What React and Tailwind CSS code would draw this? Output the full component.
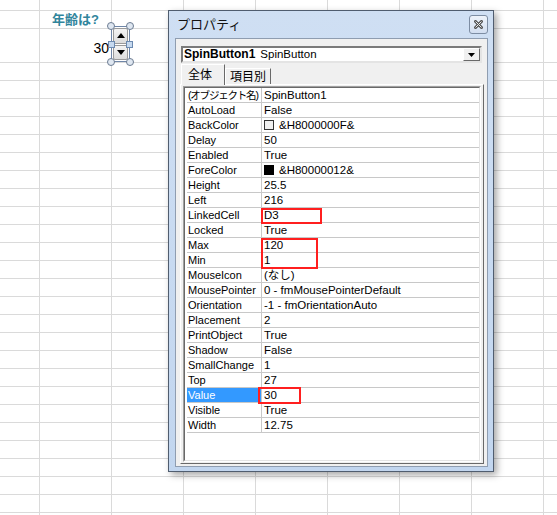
import React from "react";

const rowHeights = [11, 18, 34, ...Array(26).fill(18)];
const colWidths = [40, 72, 72, 72, 72, 72, 72, 72, 72];

const props = [
  ["(オブジェクト名)", "SpinButton1"],
  ["AutoLoad", "False"],
  ["BackColor", "&H8000000F&", "light"],
  ["Delay", "50"],
  ["Enabled", "True"],
  ["ForeColor", "&H80000012&", "dark"],
  ["Height", "25.5"],
  ["Left", "216"],
  ["LinkedCell", "D3"],
  ["Locked", "True"],
  ["Max", "120"],
  ["Min", "1"],
  ["MouseIcon", "(なし)"],
  ["MousePointer", "0 - fmMousePointerDefault"],
  ["Orientation", "-1 - fmOrientationAuto"],
  ["Placement", "2"],
  ["PrintObject", "True"],
  ["Shadow", "False"],
  ["SmallChange", "1"],
  ["Top", "27"],
  ["Value", "30"],
  ["Visible", "True"],
  ["Width", "12.75"],
];

const FONT = { fontFamily: '"Liberation Sans", "Noto Sans CJK JP", sans-serif' };

function Cell({ r, c }) {
  const h = rowHeights[r];
  const w = colWidths[c];
  const hc = h === 11 ? "h-[11px]" : h === 34 ? "h-[34px]" : "h-[18px]";
  const wc = w === 40 ? "w-[40px]" : "w-[72px]";
  let content = null;
  let extra = "";
  if (r === 1 && c === 1) {
    extra = "justify-center items-center";
    content = (
      <span className="text-[13px] leading-[15px] font-bold text-[#31859c] whitespace-nowrap">
        年齢は?
      </span>
    );
  }
  if (r === 2 && c === 1) {
    extra = "justify-end items-end pr-[2px] pb-[6px]";
    content = <span className="text-[14px] leading-[16px] text-black">30</span>;
  }
  return (
    <div className={`${wc} ${hc} shrink-0 flex border-r border-b border-[#dadada] ${extra}`}>
      {content}
    </div>
  );
}

function Handle({ pos }) {
  return <div className={`absolute ${pos} w-[8px] h-[8px] rounded-full border border-[#6c7c92] bg-[#dfe7f1]`} />;
}
function SqHandle({ pos }) {
  return <div className={`absolute ${pos} w-[7px] h-[7px] border border-[#6c8ab0] bg-[#c6d9ef]`} />;
}

function SpinButton() {
  return (
    <div className="absolute left-[111px] top-[26px] w-[19px] h-[36px] border border-[#6f86a8]">
      <div className="flex flex-col h-full px-[1px] py-[1px] gap-[1px]">
        <div className="flex-1 flex items-center justify-center rounded-[2px] border border-[#9a9a9a] bg-gradient-to-b from-[#f4f4f4] to-[#dcdcdc]">
          <svg width="8" height="5" viewBox="0 0 8 5">
            <polygon points="0,5 8,5 4,0" fill="#000" />
          </svg>
        </div>
        <div className="flex-1 flex items-center justify-center rounded-[2px] border border-[#9a9a9a] bg-gradient-to-b from-[#f4f4f4] to-[#dcdcdc]">
          <svg width="8" height="5" viewBox="0 0 8 5">
            <polygon points="0,0 8,0 4,5" fill="#000" />
          </svg>
        </div>
      </div>
      <Handle pos="-left-[5px] -top-[5px]" />
      <Handle pos="-right-[5px] -top-[5px]" />
      <Handle pos="-left-[5px] -bottom-[5px]" />
      <Handle pos="-right-[5px] -bottom-[5px]" />
      <SqHandle pos="-left-[4px] top-[14px]" />
      <SqHandle pos="-right-[4px] top-[14px]" />
    </div>
  );
}

function PropRow({ label, value, swatch, selected }) {
  return (
    <div className="flex h-[15px] border-b border-[#c8c8c8] text-[11px] leading-[14px]">
      <div
        className={`w-[75px] shrink-0 border-r border-[#c8c8c8] pl-[1px] whitespace-nowrap overflow-hidden ${
          selected ? "bg-[#3399ff] text-white" : "text-black"
        }`}
      >
        {label.startsWith("(") ? (
          <span className="text-[10.5px] tracking-[-1.2px]">{label}</span>
        ) : (
          label
        )}
      </div>
      <div className="flex-1 flex items-center pl-[2px] text-black whitespace-nowrap overflow-hidden">
        {swatch === "light" && <span className="w-[10px] h-[10px] mr-[5px] border border-[#333] bg-[#f0f0f0]" />}
        {swatch === "dark" && <span className="w-[10px] h-[10px] mr-[5px] border border-[#000] bg-[#000]" />}
        <span className="text-[11.5px]">{value}</span>
      </div>
    </div>
  );
}

function Dialog() {
  return (
    <div
      className="absolute left-[168px] top-[10px] w-[326px] h-[462px] border border-[#505d6f] bg-gradient-to-b from-[#cfdff3] to-[#c2d6ef] flex flex-col shadow-[3px_3px_7px_rgba(0,0,0,0.35)]"
      style={FONT}
    >
      <div className="h-[27px] shrink-0 flex items-center justify-between pl-[8px] pr-[5px]">
        <span className="text-[13px] leading-[16px] text-[#111]">プロパティ</span>
        <div className="w-[19px] h-[19px] rounded-[3px] border border-[#7d8da3] bg-gradient-to-b from-[#eef3fa] to-[#d2def0] flex items-center justify-center">
          <svg width="9" height="9" viewBox="0 0 9 9">
            <path d="M1.5 1.5 L7.5 7.5 M7.5 1.5 L1.5 7.5" stroke="#555" strokeWidth="3" strokeLinecap="square" />
            <path d="M1.5 1.5 L7.5 7.5 M7.5 1.5 L1.5 7.5" stroke="#e8e8e8" strokeWidth="1" />
          </svg>
        </div>
      </div>
      <div className="flex-1 ml-[6px] mr-[5px] mb-[4px] border border-[#8f9db0] bg-[#f0f0f0] flex flex-col">
        <div className="mt-[7px] mx-[5px] h-[17px] shrink-0 flex border-2 border-t-[#7a7a7a] border-l-[#7a7a7a] border-r-[#e4e4e4] border-b-[#e4e4e4] bg-white">
          <div className="flex-1 flex items-center pl-[1px] whitespace-nowrap overflow-hidden">
            <span className="text-[12px] leading-[13px] font-bold text-black">SpinButton1</span>
            <span className="text-[11.5px] leading-[13px] text-black ml-[5px]">SpinButton</span>
          </div>
          <div className="w-[17px] h-full shrink-0 flex items-center justify-center border border-t-white border-l-white border-r-[#696969] border-b-[#696969] bg-[#f0f0f0]">
            <svg width="7" height="4" viewBox="0 0 7 4">
              <polygon points="0,0 7,0 3.5,4" fill="#000" />
            </svg>
          </div>
        </div>
        <div className="mt-[1px] h-[20px] shrink-0 flex items-end ml-[5px]">
          <div className="relative z-10 w-[44px] h-[21px] -mb-[1px] border-l border-t border-r border-l-white border-t-white border-r-[#696969] bg-[#f0f0f0] pl-[6px] pt-[3px] text-[12px] leading-[14px] text-black">
            全体
          </div>
          <div className="w-[46px] h-[16px] border-l border-t border-r border-l-white border-t-white border-r-[#696969] bg-[#f0f0f0] pl-[4px] pt-[1px] text-[12px] leading-[14px] text-black">
            項目別
          </div>
        </div>
        <div className="flex-1 ml-[4px] mr-[3px] mb-[2px] border border-t-white border-l-white border-r-[#696969] border-b-[#696969] pl-[2px] pr-[2px] pt-[1px] pb-[1px] flex">
          <div className="flex-1 flex border border-t-[#a0a0a0] border-l-[#a0a0a0] border-r-white border-b-white">
            <div className="flex-1 border border-t-[#696969] border-l-[#696969] border-r-[#e3e3e3] border-b-[#e3e3e3] bg-white pl-[2px]">
              <div className="relative">
                {props.map(([l, v, s]) => (
                  <PropRow key={l} label={l} value={v} swatch={s} selected={l === "Value"} />
                ))}
                <div className="absolute left-[74px] top-[120px] w-[61px] h-[16px] border-2 border-[#ff1f1f]" />
                <div className="absolute left-[74px] top-[150px] w-[57px] h-[31px] border-2 border-[#ff1f1f]" />
                <div className="absolute left-[71px] top-[299px] w-[43px] h-[17px] border-2 border-[#ff1f1f]" />
              </div>
            </div>
          </div>
        </div>
      </div>
    </div>
  );
}

export default function App() {
  return (
    <div className="relative w-[557px] h-[515px] overflow-hidden bg-white" style={FONT}>
      <div className="flex flex-col">
        {rowHeights.map((h, r) => (
          <div key={r} className="flex">
            {colWidths.map((w, c) => (
              <Cell key={c} r={r} c={c} />
            ))}
          </div>
        ))}
      </div>
      <SpinButton />
      <Dialog />
    </div>
  );
}
